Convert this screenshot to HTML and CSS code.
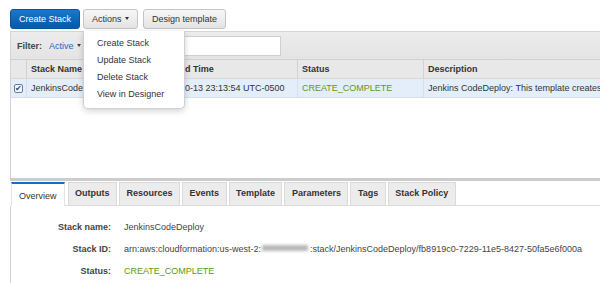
FILE: index.html
```html
<!DOCTYPE html>
<html lang="en">
<head>
  <meta charset="UTF-8" />
  <title>CloudFormation Stacks</title>
  <link rel="stylesheet" href="styles.css">
</head>
<body>
  <!-- toolbar -->
  <div class="toolbar">
    <button class="btn primary">Create Stack</button>
    <div class="actions">
      <button class="btn">Actions <span class="caret"></span></button>
      <ul class="menu">
        <li>Create Stack</li>
        <li>Update Stack</li>
        <li>Delete Stack</li>
        <li>View in Designer</li>
      </ul>
    </div>
    <button class="btn design">Design template</button>
  </div>

  <!-- stack list -->
  <div class="list">
    <div class="filter">
      <span class="filter-label">Filter:</span>
      <span class="filter-value">Active <span class="caret dark"></span></span>
      <span class="search"></span>
    </div>
    <div class="row head">
      <div class="cell check"></div>
      <div class="cell name">Stack Name</div>
      <div class="cell time">Created Time</div>
      <div class="cell status">Status</div>
      <div class="cell desc">Description</div>
    </div>
    <div class="row selected">
      <div class="cell check"><span class="box">&#10004;</span></div>
      <div class="cell name">JenkinsCodeDeploy</div>
      <div class="cell time">2015-10-13 23:13:54 UTC-0500</div>
      <div class="cell status green">CREATE_COMPLETE</div>
      <div class="cell desc">Jenkins CodeDeploy: This template creates</div>
    </div>
    <div class="empty"></div>
  </div>

  <div class="splitter"></div>

  <!-- tabs -->
  <div class="tabs">
    <div class="tab active">Overview</div>
    <div class="tab">Outputs</div>
    <div class="tab">Resources</div>
    <div class="tab">Events</div>
    <div class="tab">Template</div>
    <div class="tab">Parameters</div>
    <div class="tab">Tags</div>
    <div class="tab">Stack Policy</div>
  </div>

  <div class="details">
    <div class="field">
      <span class="label">Stack name:</span>
      <span class="value">JenkinsCodeDeploy</span>
    </div>
    <div class="field">
      <span class="label">Stack ID:</span>
      <span class="value">arn:aws:cloudformation:us-west-2:<span class="blur"></span>:stack/JenkinsCodeDeploy/fb8919c0-7229-11e5-8427-50fa5e6f000a</span>
    </div>
    <div class="field">
      <span class="label">Status:</span>
      <span class="value green">CREATE_COMPLETE</span>
    </div>
  </div>
</body>
</html>
```
FILE: styles.css
```css
* {
  margin: 0;
  padding: 0;
  box-sizing: border-box;
}
body {
  font-family: "Liberation Sans", Arial, sans-serif;
  font-size: 9px;
  color: #333;
  background: #fff;
  overflow: hidden;
  height: 283px;
}
.toolbar {
  display: flex;
  gap: 3px;
  padding: 9px 10px 3px;
  height: 31px;
}
.btn {
  font-family: inherit;
  font-size: 9px;
  height: 20px;
  padding: 0;
  border: 1px solid #c4c4c4;
  border-radius: 3px;
  background: linear-gradient(#f7f7f7, #e3e3e3);
  color: #333;
}
.btn.primary {
  background: linear-gradient(#1a78cc, #0559a8);
  border-color: #0b5598;
  color: #fff;
  width: 70px;
}
.actions {
  position: relative;
  margin-right: 2px;
}
.actions .btn {
  width: 55px;
}
.btn.design {
  width: 83px;
}
.caret {
  display: inline-block;
  width: 0;
  height: 0;
  border-left: 2.5px solid transparent;
  border-right: 2.5px solid transparent;
  border-top: 3px solid #333;
  vertical-align: 2px;
  margin-left: 1px;
}
.caret.dark {
  border-top-color: #444;
}
.menu {
  position: absolute;
  top: 22px;
  left: 0;
  width: 102px;
  list-style: none;
  background: #fff;
  border: 1px solid #d0d0d0;
  border-top: none;
  border-radius: 0 0 5px 5px;
  box-shadow: 0 2px 6px rgba(0, 0, 0, 0.18);
  padding: 4px 0 5px;
  z-index: 5;
}
.menu li {
  padding-left: 13px;
  height: 17px;
  line-height: 17px;
  color: #333;
}

.list {
  margin-left: 10px;
  border-left: 1px solid #d4d4d4;
}
.filter {
  display: flex;
  align-items: center;
  height: 29px;
  padding-left: 6px;
  background: linear-gradient(#ececec, #e4e4e4);
  border-top: 1px solid #d6d6d6;
  border-bottom: 1px solid #d0d0d0;
}
.filter-label {
  width: 32px;
  font-weight: bold;
  color: #444;
}
.filter-value {
  width: 40px;
  color: #1a6ac4;
}
.search {
  margin-left: 91px;
  width: 101px;
  height: 20px;
  background: #fff;
  border: 1px solid #cfcfcf;
}
.row {
  display: flex;
  height: 19px;
  align-items: stretch;
}
.row.head {
  background: #e8e8e8;
  font-weight: bold;
  color: #333;
  border-bottom: 1px solid #d8d8d8;
}
.row.selected {
  background: #e4eefa;
  border-bottom: 1px solid #d4e0ee;
}
.cell {
  display: flex;
  align-items: center;
  padding-left: 4px;
  white-space: nowrap;
  overflow: hidden;
  border-right: 1px solid #d2d2d2;
}
.row.selected .cell {
  border-right-color: #d6e0eb;
}
.cell.check {
  width: 16px;
  padding-left: 3px;
}
.cell.name {
  width: 126px;
}
.cell.time {
  width: 145px;
}
.cell.status {
  width: 126px;
}
.cell.desc {
  flex: 1;
  border-right: none;
}
.box {
  display: inline-block;
  width: 9px;
  height: 9px;
  border: 1px solid #6b7c95;
  border-radius: 2px;
  background: #f3f6fb;
  color: #1f4f94;
  font-size: 8px;
  line-height: 7px;
  text-align: center;
}
.green {
  color: #5a9c12;
}
.empty {
  height: 80px;
}
.splitter {
  margin-left: 10px;
  height: 3px;
  background: #cccccc;
}
.tabs {
  display: flex;
  gap: 2px;
  margin: 1px 0 0 11px;
  height: 24px;
  border-bottom: 1px solid #dcdcdc;
}
.tab {
  height: 23px;
  line-height: 21px;
  padding: 0 6.5px;
  background: #ececec;
  border: 1px solid #dadada;
  border-bottom: none;
  font-weight: bold;
  color: #333;
}
.tab.active {
  background: #fff;
  border-top: 2px solid #1a6ac4;
  border-left-color: #e4e4e4;
  border-right-color: #e4e4e4;
  height: 24px;
  font-weight: normal;
  line-height: 24px;
  padding: 0 7px;
  margin-right: 1px;
}
.details {
  margin-left: 10px;
  border-left: 1px solid #d4d4d4;
  padding-top: 10px;
  height: 80px;
}
.field {
  display: flex;
  gap: 13px;
  height: 22px;
  align-items: center;
}
.label {
  width: 100px;
  text-align: right;
  font-weight: bold;
  color: #444;
  white-space: nowrap;
}
.value {
  color: #444;
  white-space: nowrap;
}
.value.green {
  color: #5a9c12;
}
.blur {
  display: inline-block;
  width: 46px;
  height: 6px;
  background: #b8b8b8;
  filter: blur(1.5px);
  margin: 0 2px 1px 1px;
}
```
